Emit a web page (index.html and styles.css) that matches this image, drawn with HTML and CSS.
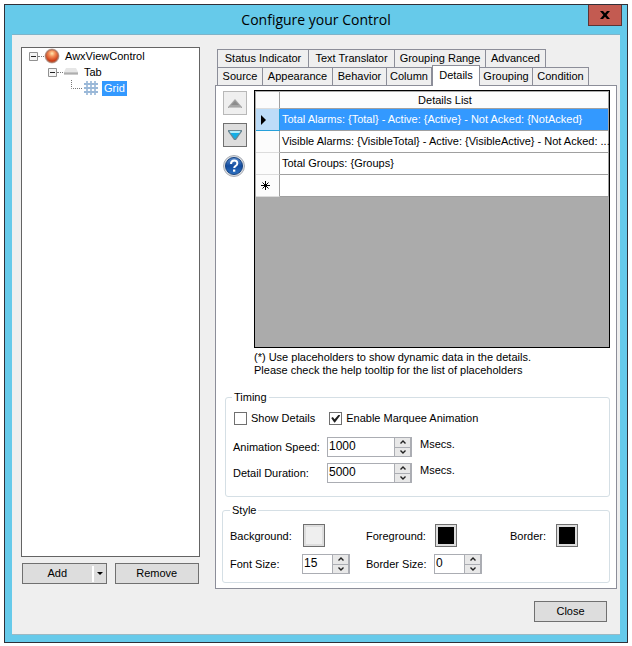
FILE: index.html
```html
<!DOCTYPE html>
<html lang="en">
<head>
<meta charset="utf-8">
<title>Configure your Control</title>
<link rel="stylesheet" href="styles.css">
</head>
<body>
<div class="window">
  <header class="titlebar">
    <h1>Configure your Control</h1>
    <button class="window-close" type="button" aria-label="Close window">
      <svg width="10" height="8" viewBox="0 0 10 8"><path d="M0 0h3l2 2.3L7 0h3L6.600 4 10 8H7L5 5.700 3 8H0l3.400-4z"/></svg>
    </button>
  </header>
  <main class="client">
    <section class="sidebar">
      <ul class="tree">
        <li class="node">
          <svg class="toggle" width="9" height="9" viewBox="0 0 9 9"><path d="M.5.5h8v8h-8z" fill="#f4f4f4" stroke="#919191"/><path d="M2 4.500h5" stroke="#222"/></svg>
          <span class="dots"></span>
          <svg width="16" height="16" viewBox="0 0 16 16"><defs><radialGradient id="ball" cx=".5" cy=".3" r=".6"><stop offset="0" stop-color="#ffe8b0"/><stop offset=".4" stop-color="#f4905a"/><stop offset="1" stop-color="#cc3a14"/></radialGradient></defs><circle cx="8" cy="8" r="7.500" fill="#c9b5ad"/><circle cx="8" cy="8" r="6.300" fill="url(#ball)" stroke="#a8705a"/></svg>
          <span class="label">AwxViewControl</span>
        </li>
        <li class="node level2">
          <svg class="toggle" width="9" height="9" viewBox="0 0 9 9"><path d="M.5.5h8v8h-8z" fill="#f4f4f4" stroke="#919191"/><path d="M2 4.500h5" stroke="#222"/></svg>
          <span class="dots"></span>
          <svg width="16" height="16" viewBox="0 0 16 16"><path d="M3 4h10l2 4H1z" fill="#e6e6e6"/><path d="M1 8h14v2H1z" fill="#c4c4c4"/><path d="M1 10h14" stroke="#999"/></svg>
          <span class="label">Tab</span>
        </li>
        <li class="node level3">
          <svg width="12" height="16" viewBox="0 0 12 16"><path d="M.5 0v8.500H12" fill="none" stroke="#777" stroke-dasharray="1 1"/></svg>
          <svg width="16" height="16" viewBox="0 0 16 16"><g fill="none" stroke="#a9c3de" stroke-width="2"><path d="M4 1v14M8 1v14M12 1v14"/><path d="M1 4h14M1 8h14M1 12h14" stroke="#9ab8d8"/></g></svg>
          <span class="label selected">Grid</span>
        </li>
      </ul>
      <div class="tree-actions">
        <button class="button add" type="button"><span class="add-text">Add</span><span class="add-arrow"><svg width="6" height="3" viewBox="0 0 6 3"><path d="M0 0h6L3 3z"/></svg></span></button>
        <button class="button remove" type="button">Remove</button>
      </div>
    </section>

    <section class="settings">
      <nav class="tabs">
        <div class="tab-row upper">
          <button class="tab" type="button">Status Indicator</button>
          <button class="tab" type="button">Text Translator</button>
          <button class="tab" type="button">Grouping Range</button>
          <button class="tab" type="button">Advanced</button>
        </div>
        <div class="tab-row lower">
          <button class="tab" type="button">Source</button>
          <button class="tab" type="button">Appearance</button>
          <button class="tab" type="button">Behavior</button>
          <button class="tab" type="button">Column</button>
          <button class="tab active" type="button">Details</button>
          <button class="tab" type="button">Grouping</button>
          <button class="tab" type="button">Condition</button>
        </div>
      </nav>
      <div class="panel">
        <div class="list-area">
          <div class="list-tools">
            <button class="tool disabled" type="button" aria-label="Move up">
              <svg width="14" height="9" viewBox="0 0 14 9"><path d="M7 0l7 8v1H0V8z" fill="#a5a5a5"/><path d="M7 2l4 4H3z" fill="#8c8c8c"/><path d="M1 8.500h12" stroke="#c4c4c4"/></svg>
            </button>
            <button class="tool" type="button" aria-label="Move down">
              <svg width="14" height="10" viewBox="0 0 14 10"><path d="M0 0h14v1.500L8 10H6L0 1.500z" fill="#6a8794"/><path d="M1.500 1h11l-1 2h-9z" fill="#b3ecfa"/><path d="M2.500 3h9L7 9z" fill="#12aee5"/></svg>
            </button>
            <button class="help" type="button" aria-label="Help">
              <svg width="22" height="22" viewBox="0 0 22 22"><defs><linearGradient id="blue" x2="0" y2="1"><stop offset="0" stop-color="#5d8fd0"/><stop offset=".5" stop-color="#134c9f"/><stop offset="1" stop-color="#2f74c4"/></linearGradient></defs><circle cx="11" cy="11" r="10.500" fill="#d8dbe0" stroke="#a9aeb6"/><circle cx="11" cy="11" r="8.500" fill="url(#blue)" stroke="#15427f"/><path d="M8 9q0-3.500 3.200-3.500T14.300 8.400q0 1.500-1.600 2.500T11.200 13" fill="none" stroke="#fff" stroke-width="2"/><path d="M10 14.500h2.300v2.200H10z" fill="#fff"/></svg>
            </button>
          </div>
          <div class="list-main">
            <div class="grid-box">
              <table class="details">
                <thead><tr><th class="row-head"></th><th>Details List</th></tr></thead>
                <tbody>
                  <tr class="current"><th class="row-head"><svg width="5" height="10" viewBox="0 0 5 10"><path d="M0 0l5 5-5 5z"/></svg></th><td>Total Alarms: {Total} - Active: {Active} - Not Acked: {NotAcked}</td></tr>
                  <tr><th class="row-head"></th><td>Visible Alarms: {VisibleTotal} - Active: {VisibleActive} - Not Acked: ...</td></tr>
                  <tr><th class="row-head"></th><td>Total Groups: {Groups}</td></tr>
                  <tr><th class="row-head"><svg width="9" height="9" viewBox="0 0 9 9"><path d="M4.500 0v9M0 4.500h9M1.500 1.500l6 6M7.500 1.500l-6 6" stroke="#000"/></svg></th><td></td></tr>
                </tbody>
              </table>
            </div>
            <p class="note">(*) Use placeholders to show dynamic data in the details.<br>Please check the help tooltip for the list of placeholders</p>
          </div>
        </div>

        <fieldset class="group timing">
          <legend>Timing</legend>
          <div class="checks">
            <label class="check"><input type="checkbox">Show Details</label>
            <label class="check"><input type="checkbox" checked>Enable Marquee Animation</label>
          </div>
          <div class="timing-row">
            <label for="speed">Animation Speed:</label>
            <span class="spinner"><input id="speed" type="text" value="1000"><span class="steps"><button type="button" aria-label="Increase speed"><svg width="6" height="4" viewBox="0 0 6 4"><path d="M.5 3.500L3 1l2.500 2.500"/></svg></button><button type="button" aria-label="Decrease speed"><svg width="6" height="4" viewBox="0 0 6 4"><path d="M.5.500L3 3 5.500.500"/></svg></button></span></span>
            <span class="unit">Msecs.</span>
          </div>
          <div class="timing-row">
            <label for="duration">Detail Duration:</label>
            <span class="spinner"><input id="duration" type="text" value="5000"><span class="steps"><button type="button" aria-label="Increase duration"><svg width="6" height="4" viewBox="0 0 6 4"><path d="M.5 3.500L3 1l2.500 2.500"/></svg></button><button type="button" aria-label="Decrease duration"><svg width="6" height="4" viewBox="0 0 6 4"><path d="M.5.500L3 3 5.500.500"/></svg></button></span></span>
            <span class="unit">Msecs.</span>
          </div>
        </fieldset>

        <fieldset class="group style">
          <legend>Style</legend>
          <div class="style-grid">
            <label for="background">Background:</label>
            <button class="swatch light" id="background" type="button"></button>
            <label class="middle" for="foreground">Foreground:</label>
            <button class="swatch" id="foreground" type="button"></button>
            <label class="last" for="border">Border:</label>
            <button class="swatch" id="border" type="button"></button>
            <label for="font-size">Font Size:</label>
            <span class="spinner"><input id="font-size" type="text" value="15"><span class="steps"><button type="button" aria-label="Increase font size"><svg width="6" height="4" viewBox="0 0 6 4"><path d="M.5 3.500L3 1l2.500 2.500"/></svg></button><button type="button" aria-label="Decrease font size"><svg width="6" height="4" viewBox="0 0 6 4"><path d="M.5.500L3 3 5.500.500"/></svg></button></span></span>
            <label class="middle" for="border-size">Border Size:</label>
            <span class="spinner"><input id="border-size" type="text" value="0"><span class="steps"><button type="button" aria-label="Increase border size"><svg width="6" height="4" viewBox="0 0 6 4"><path d="M.5 3.500L3 1l2.500 2.500"/></svg></button><button type="button" aria-label="Decrease border size"><svg width="6" height="4" viewBox="0 0 6 4"><path d="M.5.500L3 3 5.500.500"/></svg></button></span></span>
          </div>
        </fieldset>
      </div>
      <footer class="footer"><button class="button close" type="button">Close</button></footer>
    </section>
  </main>
</div>
</body>
</html>
```
FILE: styles.css
```css
* { box-sizing: border-box; }
body {
  margin: 0;
  padding: 4px 4px 3px;
  min-height: 100vh;
  display: flex;
  background: #fff;
  color: #000;
  font: 11px/13px "Liberation Sans", Arial, sans-serif;
}
button, input { font: inherit; color: inherit; padding: 0; margin: 0; border-radius: 0; }
svg { display: block; flex: none; }
ul, p, h1 { margin: 0; padding: 0; list-style: none; }

.window {
  flex: 1;
  display: flex;
  flex-direction: column;
  background: #66caea;
  border: 1px solid #303038;
  padding: 0 7px 7px;
}
.titlebar {
  position: relative;
  height: 29px;
  display: flex;
  align-items: center;
  justify-content: center;
}
.titlebar h1 { font: 14px/20px "Open Sans", "Noto Sans", sans-serif; }
.window-close {
  position: absolute;
  top: 0;
  right: -2px;
  width: 34px;
  height: 21px;
  display: grid;
  place-items: center;
  background: #c35b51;
  border: 1px solid #5c3435;
  border-top: 0;
}
.client {
  flex: 1;
  display: flex;
  gap: 15px;
  padding: 12px 3px 0 9px;
  background: #efefef;
  border-top: 1px solid #7fb4c9;
  border-bottom: 1px solid #9bb9c4;
}

.sidebar { flex: none; width: 179px; display: flex; flex-direction: column; padding-bottom: 50px; }
.tree { flex: 1; background: #fff; border: 1px solid #646464; padding: 0 0 0 7px; }
.node { display: flex; align-items: center; height: 16px; }
.level2 { padding-left: 19px; }
.level3 { padding-left: 42px; }
.dots { width: 6px; border-top: 1px dotted #777; }
.label { margin-left: 3px; padding: 1px 2px; }
.selected { background: #3399ff; color: #fff; }
.tree-actions { display: flex; gap: 8px; padding: 6px 1px 0; }
.button {
  height: 21px;
  background: #dddddd;
  border: 1px solid #707070;
  text-align: center;
}
.tree-actions .button { flex: 1; }
.add { display: flex; align-items: center; }
.add-text { flex: 1; }
.add-arrow { height: 16px; border-left: 2px solid #fff; padding: 6px 3px 0; }

.settings { flex: 1; min-width: 0; display: flex; flex-direction: column; }
.tabs { padding: 2px 0 0 2px; }
.tab-row { display: grid; height: 18px; }
.upper { grid-template-columns: 92px 86px 91px 60px; }
.lower { grid-template-columns: 46px 70px 54px 45px 48px 53px 56px; }
.tab {
  background: #efefef;
  border: 1px solid #8c8e99;
  border-bottom: 0;
  border-left-width: 0;
  white-space: nowrap;
  line-height: 17px;
}
.tab:first-child { border-left-width: 1px; }
.tab.active { background: #fff; border-left-width: 1px; margin: -2px 0 -1px; padding-bottom: 2px; z-index: 1; }
.panel {
  flex: 1;
  background: #fff;
  border: 1px solid #8c8e99;
  padding: 4px 6px 5px;
  display: flex;
  flex-direction: column;
}
.footer { height: 45px; padding: 12px 10px 0 0; text-align: right; }
.close { width: 73px; }

.list-area { flex: 1; display: flex; gap: 7px; }
.list-tools { width: 25px; display: flex; flex-direction: column; gap: 8px; padding: 1px 0 0 1px; }
.tool {
  width: 24px;
  height: 24px;
  display: grid;
  place-items: center;
  background: #dddddd;
  border: 1px solid #707070;
}
.tool.disabled { background: #efefef; border-color: #b8b8b8; }
.help { width: 22px; height: 22px; border: 0; background: none; }
.list-main { flex: 1; min-width: 0; display: flex; flex-direction: column; }
.grid-box { flex: 1; background: #ababab; border: 1px solid #000; padding: 1px 0 0 1px; }
.details { width: 100%; border-collapse: separate; border-spacing: 0; table-layout: fixed; }
.details th, .details td {
  height: 22px;
  padding: 0 0 0 2px;
  border: 1px solid #a0a0a0;
  border-width: 0 1px 1px 0;
  background: #fff;
  text-align: left;
  font-weight: normal;
  white-space: nowrap;
}
.details thead th { height: 17px; text-align: center; background: #fcfcfc; }
.details .row-head { width: 24px; padding-left: 5px; background: #fcfcfc; border-bottom-color: #dcdcdc; }
.details .current td { background: #3399ff; color: #fff; }
.details .current .row-head { background: #bcdcf8; border-color: #26a0da; }
.note { padding-top: 3px; white-space: nowrap; }

.group {
  margin: 0;
  min-width: 0;
  border: 1px solid #d5dfe5;
  border-radius: 3px;
}
.group legend { padding: 0 2px; }
.timing { margin: 14px 0 0 3px; padding: 7px 0 13px 7px; }
.timing legend { margin-left: -1px; }
.checks { display: flex; gap: 14px; padding-left: 1px; }
.check { display: flex; align-items: center; gap: 4px; height: 15px; }
.check input {
  appearance: none;
  width: 13px;
  height: 13px;
  display: grid;
  place-items: center;
  background: #fff;
  border: 1px solid #707070;
}
.check input:checked::before {
  content: "";
  width: 9px;
  height: 8px;
  background: #212121;
  clip-path: polygon(0 45%, 18% 32%, 38% 60%, 84% 0, 100% 14%, 42% 100%, 34% 100%);
}
.timing-row { display: grid; grid-template-columns: 94px 85px 1fr; height: 20px; margin-top: 11px; }
.timing-row + .timing-row { margin-top: 6px; }
.timing-row label, .style-grid label { align-self: center; }
.unit { padding: 1px 0 0 8px; }
.spinner {
  display: flex;
  height: 20px;
  background: #fff;
  border: 1px solid #abadb3;
}
.spinner input { flex: 1; width: 0; min-width: 0; border: 0; padding: 0 1px 1px; outline: 0; background: transparent; font-size: 12px; }
.steps { width: 17px; display: flex; flex-direction: column; gap: 1px; background: #abadb3; padding-left: 1px; padding-right: 1px; }
.steps button { flex: 1; display: grid; place-items: center; background: #e8e8e8; border: 0; }
.steps path { fill: none; stroke: #222; stroke-width: 1.4; }

.style { margin-top: 7px; padding: 7px 0 8px 7px; }
.style-grid {
  display: grid;
  grid-template-columns: 72px 48px 84px 48px 1fr 54px;
  grid-template-rows: 24px 20px;
  row-gap: 6px;
}
.style-grid .middle { padding-left: 16px; }
.style-grid .last { justify-self: end; padding-right: 9px; }
.swatch { width: 22px; height: 23px; margin-left: 1px; background: #000; border: 1px solid #707070; box-shadow: inset 0 0 0 2px #dddddd; }
.swatch.light { background: #efefef; }
```
